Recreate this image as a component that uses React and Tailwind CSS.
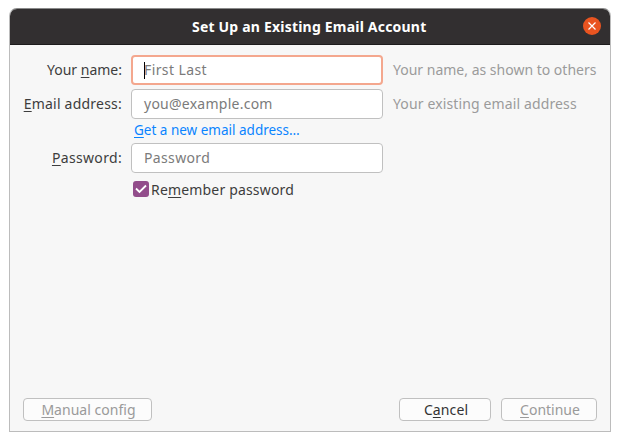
import React from "react";

function Key({ children }) {
  return (
    <span className="underline decoration-1 underline-offset-[2px] [text-decoration-skip-ink:none]">
      {children}
    </span>
  );
}

function Field({ placeholder, focused, tracking }) {
  return (
    <div
      className={
        "flex h-[30px] w-[252px] items-center rounded-[4px] bg-white text-[#7b7b7b] " +
        (focused ? "border-2 border-[#f4a78e] pl-[11px]" : "border border-[#c0c0c0] pl-[12px]")
      }
    >
      {focused && <span className="-mr-px h-[17px] w-px bg-black" />}
      <span className={tracking}>{placeholder}</span>
    </div>
  );
}

function Button({ width, disabled, children }) {
  return (
    <button
      className={
        "flex h-[23px] items-center justify-center rounded-[4px] border border-[#c0c0c0] bg-[#fcfcfc] pl-[2px] " +
        width +
        (disabled ? " text-[#9a9a9a]" : " text-[#333333]")
      }
    >
      {children}
    </button>
  );
}

export default function App() {
  return (
    <div className="h-[441px] w-[620px] bg-white pl-[9px] pt-[8px] font-['Noto_Sans','Open_Sans',sans-serif] text-[14px] leading-[18px] whitespace-nowrap text-[#3d3d3d]">
      <div className="flex h-[424px] w-[602px] flex-col overflow-hidden rounded-t-[8px] border border-[#bcbcbc] border-t-[#8a8a8a] bg-[#f7f7f7]">
        <div className="flex h-[36px] shrink-0 items-center border-b border-[#1d1b1c] bg-[#322f30] pl-[182px] pr-[9px]">
          <h1 className="w-[236px] text-[14px] font-bold tracking-[0.2px] text-white">
            Set Up an Existing Email Account
          </h1>
          <button className="-mt-px ml-auto flex size-[18px] items-center justify-center rounded-full bg-[#e95420]">
            <svg className="size-[8px]" viewBox="0 0 8 8" fill="none" stroke="white" strokeWidth="1.2">
              <path d="M0.5 0.5 7.5 7.5M7.5 0.5 0.5 7.5" />
            </svg>
          </button>
        </div>
        <div className="grid grid-cols-[112px_252px_1fr] items-center gap-x-[9px] pt-[10px]">
          <div className="text-right">Your <Key>n</Key>ame:</div>
          <Field placeholder="First Last" focused tracking="tracking-[0.4px]" />
          <div className="pl-[1px] text-[#9b9b9b]">Your name, as shown to others</div>
          <div className="mt-[4px] text-right tracking-[0.22px]"><Key>E</Key>mail address:</div>
          <div className="mt-[4px]"><Field placeholder="you@example.com" tracking="tracking-[0.25px]" /></div>
          <div className="mt-[4px] pl-[1px] tracking-[0.13px] text-[#9b9b9b]">Your existing email address</div>
          <a className="col-start-2 flex h-[24px] items-center pb-[2px] pl-[3px] text-[13.5px] text-[#0a84ff]">
            <span><Key>G</Key>et a new email address…</span>
          </a>
          <div className="col-start-1 text-right tracking-[0.33px]"><Key>P</Key>assword:</div>
          <Field placeholder="Password" tracking="tracking-[0.35px]" />
          <label className="col-start-2 flex h-[32px] items-center gap-[2px] pl-[2px]">
            <span className="flex size-[16px] items-center justify-center rounded-[3px] bg-[#924d8b]">
              <svg className="size-[12px]" viewBox="0 0 12 12" fill="none" stroke="white" strokeWidth="1.8">
                <path d="M1 5.5 4.5 9 11 2.5" />
              </svg>
            </span>
            <span className="pt-[2px] tracking-[0.17px]">Re<Key>m</Key>ember password</span>
          </label>
        </div>
        <div className="mt-auto flex items-center gap-[10px] pb-[10px] pl-[13px] pr-[13px]">
          <Button width="w-[129px]" disabled><span className="tracking-[0.03px]"><Key>M</Key>anual config</span></Button>
          <span className="grow" />
          <Button width="w-[92px]"><span className="tracking-[0.1px]">C<Key>a</Key>ncel</span></Button>
          <Button width="w-[96px]" disabled><span><Key>C</Key>ontinue</span></Button>
        </div>
      </div>
    </div>
  );
}
